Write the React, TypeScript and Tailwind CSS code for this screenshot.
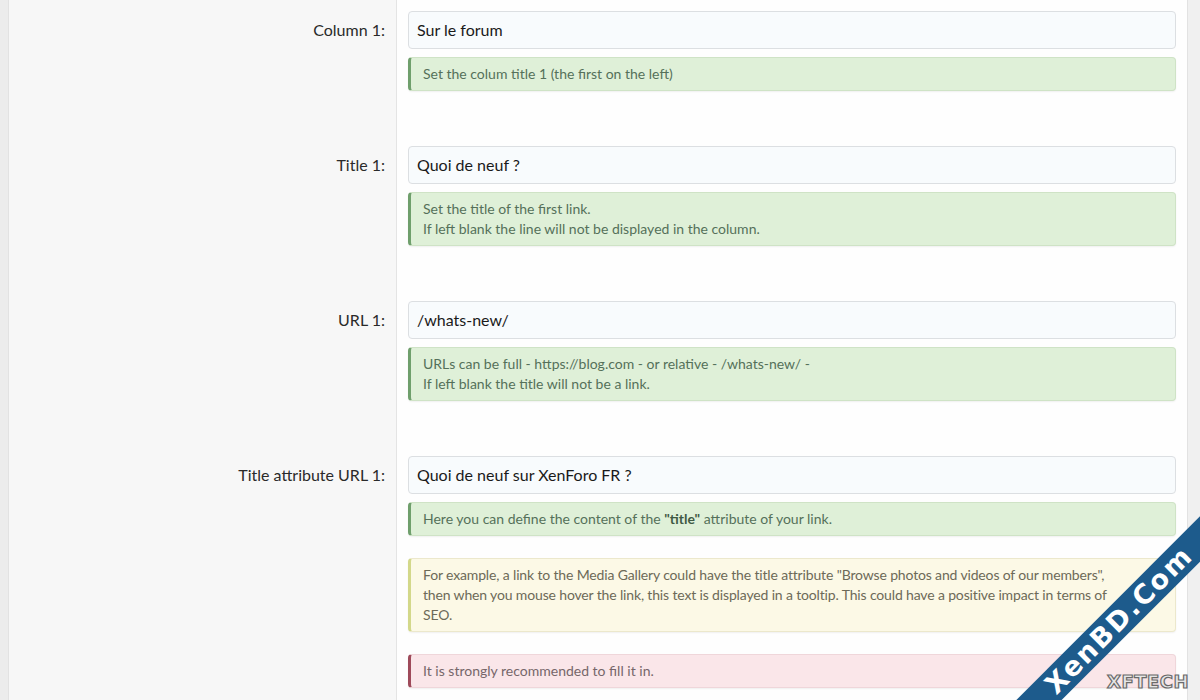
import React from 'react';

type Tone = 'green' | 'yellow' | 'red';

const toneClass: Record<Tone, string> = {
  green: 'bg-[#dff0d8] border-[#cfe3c6] border-l-[#6f9f6c] text-[#55705a]',
  yellow: 'bg-[#fcf9e6] border-[#ece8cc] border-l-[#d3d88a] text-[#6d6a58] tracking-[-0.15px]',
  red: 'bg-[#fae6e9] border-[#efd6da] border-l-[#9e4a5a] text-[#76666a]',
};

const Note = ({ tone, className = '', children }: { tone: Tone; className?: string; children: React.ReactNode }) => (
  <div
    className={`rounded-[4px] border border-l-[3px] px-[12px] py-[6px] text-[14px] leading-[20px] shadow-[0_1px_2px_rgba(0,0,0,0.06)] ${toneClass[tone]} ${className}`}
  >
    {children}
  </div>
);

interface RowProps {
  label: string;
  value: string;
  last?: boolean;
  children: React.ReactNode;
}

const Row = ({ label, value, last, children }: RowProps) => (
  <div className="flex">
    <div className="w-[388px] shrink-0 border-r border-[#e4e4e4] bg-[#f7f7f7] pt-[11px] pr-[11px]">
      <div className="flex h-[38px] items-center justify-end text-[16px] text-[#2a2a2a]">{label}</div>
    </div>
    <div className={`flex flex-1 flex-col gap-[8px] bg-[#fefefe] pt-[11px] pr-[11px] pl-[11px] ${last ? 'pb-[20px]' : 'pb-[44px]'}`}>
      <div className="flex h-[38px] items-center rounded-[4px] border border-[#dcdfe2] bg-[#f8fbfd] px-[8px] text-[16px] text-[#1a1a1a]">
        {value}
      </div>
      {children}
    </div>
  </div>
);

export default function App() {
  return (
    <div
      className="relative flex h-[700px] w-[1200px] overflow-hidden bg-[#f0f0f0]"
      style={{ fontFamily: '"Segoe UI", Lato, "Noto Sans", sans-serif' }}
    >
      <div className="w-[9px] shrink-0 border-r border-[#e2e2e2] bg-[#ececec]" />
      <div className="flex w-[1179px] shrink-0 flex-col border-r border-[#e2e2e2]">
        <Row label="Column 1:" value="Sur le forum">
          <Note tone="green">Set the colum title 1 (the first on the left)</Note>
        </Row>
        <Row label="Title 1:" value="Quoi de neuf ?">
          <Note tone="green">
            Set the title of the first link.
            <br />
            If left blank the line will not be displayed in the column.
          </Note>
        </Row>
        <Row label="URL 1:" value="/whats-new/">
          <Note tone="green">
            URLs can be full - https://blog.com - or relative - /whats-new/ -
            <br />
            If left blank the title will not be a link.
          </Note>
        </Row>
        <Row label="Title attribute URL 1:" value="Quoi de neuf sur XenForo FR ?" last>
          <Note tone="green">
            Here you can define the content of the <b className="text-[#3f5a44]">"title"</b> attribute of your link.
          </Note>
          <Note tone="yellow" className="mt-[14px]">
            For example, a link to the Media Gallery could have the title attribute "Browse photos and videos of our members",
            <br />
            then when you mouse hover the link, this text is displayed in a tooltip. This could have a positive impact in terms of
            <br />
            SEO.
          </Note>
          <Note tone="red" className="mt-[14px]">
            It is strongly recommended to fill it in.
          </Note>
        </Row>
        <div className="flex flex-1">
          <div className="w-[388px] border-r border-[#e4e4e4] bg-[#f7f7f7]" />
          <div className="flex-1 bg-[#fefefe]" />
        </div>
      </div>

      <div className="pointer-events-none absolute left-[919px] top-[604px] flex h-[32px] w-[400px] -rotate-45 items-center justify-center bg-[#1d5b8c]">
        <span className="text-[27px] font-bold tracking-[2px] text-white" style={{ fontFamily: '"DejaVu Sans", sans-serif' }}>
          XenBD.Com
        </span>
      </div>
      <div
        className="pointer-events-none absolute left-[1107px] top-[672px] text-[18px] font-black leading-[20px] tracking-[0.5px] text-[#e6e6e6] [-webkit-text-stroke:1.2px_#6a6a6a]"
        style={{ fontFamily: '"DejaVu Sans", sans-serif' }}
      >
        XFTECH
      </div>
    </div>
  );
}
